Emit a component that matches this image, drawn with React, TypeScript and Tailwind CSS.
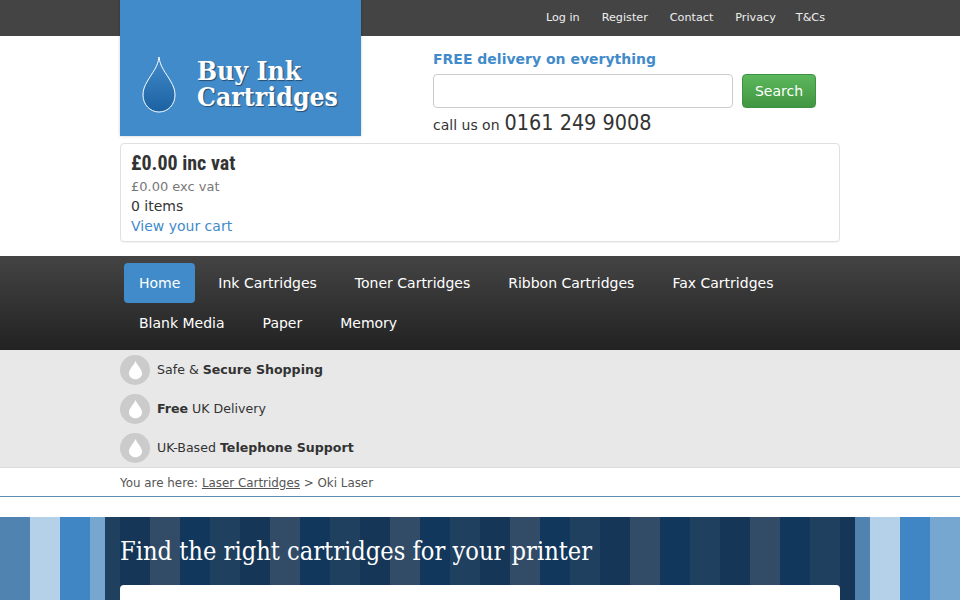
import React from "react";

const topLinks = [
  ["Log in", "mr-[22px]"],
  ["Register", "mr-[22px]"],
  ["Contact", "mr-[22px]"],
  ["Privacy", "mr-[20px]"],
  ["T&Cs", "mr-[15px]"],
];
const navLinks = ["Ink Cartridges", "Toner Cartridges", "Ribbon Cartridges", "Fax Cartridges", "Blank Media", "Paper", "Memory"];

function Drop({ className }: { className: string }) {
  return (
    <svg viewBox="0 0 34 57" className={className}>
      <defs>
        <linearGradient id="dropFill" x1="0" y1="0" x2="0" y2="1">
          <stop offset="0" stopColor="#428bca" />
          <stop offset="1" stopColor="#1c62a3" />
        </linearGradient>
      </defs>
      <path d="M17 1C18 11 24 17 28.5 25C31.5 30 33 34 33 39C33 48.5 26 56 17 56C8 56 1 48.5 1 39C1 34 2.5 30 5.5 25C10 17 16 11 17 1Z" fill="url(#dropFill)" stroke="#fff" strokeWidth="1" />
    </svg>
  );
}

function Benefit({ children }: { children: React.ReactNode }) {
  return (
    <div className="flex h-[39px] items-center gap-[7px]">
      <div className="flex h-[30px] w-[30px] items-center justify-center rounded-full bg-[#cbcbcb]">
        <svg viewBox="0 0 14 20" className="h-[20px] w-[13px]">
          <path d="M7 0C8 4 14 9 14 13.5C14 17.2 10.9 20 7 20C3.1 20 0 17.2 0 13.5C0 9 6 4 7 0Z" fill="#fff" />
        </svg>
      </div>
      <span className="pt-[1px] text-[12.6px]">{children}</span>
    </div>
  );
}

export default function App() {
  return (
    <div className="h-[600px] overflow-hidden bg-white font-['DejaVu_Sans',sans-serif] text-[14px] text-[#333]">
      <div className="h-9 bg-[#444444]">
        <div className="mx-auto flex h-9 w-[720px] items-center justify-end text-[11.2px] text-[#eeeeee]">
          {topLinks.map(([t, m]) => (
            <a key={t} className={m}>{t}</a>
          ))}
        </div>
      </div>

      <div className="mx-auto w-[720px]">
        <div className="flex">
          <div className="-mt-9 flex h-[136px] w-[241px] items-end bg-[#428bca] pb-[23px] pl-[22px] shadow-[0_0_3px_rgba(0,0,0,0.2)]">
            <Drop className="h-[57px] w-[34px]" />
            <div className="mb-[3px] ml-[21px] font-['DejaVu_Serif',serif] text-[26.4px] font-bold leading-[26px] text-white [font-stretch:condensed] [text-shadow:1px_1px_1px_rgba(0,0,0,0.45)]">
              Buy Ink<br />Cartridges
            </div>
          </div>
          <div className="ml-[72px] pt-[14px]">
            <div className="text-[14px] font-bold leading-[18px] text-[#428bca]">FREE delivery on everything</div>
            <div className="mt-[6px] flex gap-[9px]">
              <input className="h-[34px] w-[300px] rounded-[4px] border border-[#cccccc] bg-white" />
              <button className="h-[34px] w-[74px] rounded-[4px] border border-[#3f9142] bg-[linear-gradient(#5cb85c,#419641)] text-[14px] text-white">Search</button>
            </div>
            <div className="mt-[1px] flex items-baseline gap-[5px] leading-[28px]">
              <span>call us on</span>
              <span className="text-[21.4px] [font-stretch:condensed]">0161 249 9008</span>
            </div>
          </div>
        </div>

        <div className="mt-[4px] h-[99px] rounded-[4px] border border-[#e0e0e0] px-[10px] pt-[6px] shadow-[0_1px_1px_rgba(0,0,0,0.05)]">
          <div className="font-['Roboto',sans-serif] text-[20px] font-bold leading-[26px] [font-stretch:condensed]">£0.00 inc vat</div>
          <div className="mt-[1px] text-[13px] leading-[19px] text-[#777777]">£0.00 exc vat</div>
          <div className="leading-[20px]">0 items</div>
          <a className="block leading-[20px] text-[#428bca]">View your cart</a>
        </div>
      </div>

      <div className="mt-[14px] h-[94px] bg-[linear-gradient(#444444,#222222)]">
        <div className="mx-auto flex w-[720px] flex-wrap pl-[4px] pt-[7px] text-white">
          <a className="mr-[8px] flex h-10 items-center rounded-[4px] bg-[#428bca] px-[15px]">Home</a>
          {navLinks.map((t) => (
            <a key={t} className="mr-[8px] flex h-10 items-center px-[15px]">{t}</a>
          ))}
        </div>
      </div>

      <div className="h-[117px] bg-[#e8e8e8]">
        <div className="mx-auto w-[720px]">
          <Benefit>Safe &amp; <b>Secure Shopping</b></Benefit>
          <Benefit><b>Free</b> UK Delivery</Benefit>
          <Benefit>UK-Based <b>Telephone Support</b></Benefit>
        </div>
      </div>

      <div className="h-[30px] border-t border-b border-t-[#dddddd] border-b-[#5f8cb0]">
        <div className="mx-auto w-[720px] pt-[1px] text-[11.9px] leading-[29px] text-[#555555]">
          You are here: <a className="underline">Laser Cartridges</a> &gt; Oki Laser
        </div>
      </div>

      <div className="mt-[20px] h-[300px] bg-[repeating-linear-gradient(90deg,#5083b0_0,#5083b0_30px,#b5d1e9_30px,#b5d1e9_60px,#4086c4_60px,#4086c4_90px,#75a7d0_90px,#75a7d0_120px)] px-[105px]">
        <div className="h-full bg-[rgba(0,25,53,0.72)] px-[15px] pt-[17px]">
          <h1 className="font-['DejaVu_Serif',serif] text-[25.2px] leading-[36px] text-white [font-stretch:condensed]">Find the right cartridges for your printer</h1>
          <div className="mt-[15px] h-[200px] rounded-[4px] bg-white" />
        </div>
      </div>
    </div>
  );
}
